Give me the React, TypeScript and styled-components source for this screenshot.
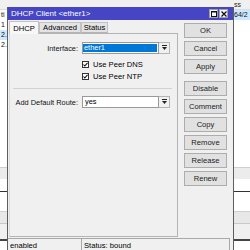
import React from "react";
import styled, { createGlobalStyle } from "styled-components";

const GlobalStyle = createGlobalStyle`
  html, body { margin: 0; padding: 0; background: #ffffff; }
  body {
    width: 250px; height: 250px; overflow: hidden;
    font-family: "Liberation Sans", Arial, sans-serif;
    font-size: 7.4px; color: #000;
  }
  #root { width: 250px; height: 250px; }
`;

const Desktop = styled.div`
  position: relative;
  width: 250px;
  height: 250px;
  overflow: hidden;
  background: #ffffff;
`;

/* ---------- background list window ---------- */
const ListWindow = styled.div`
  display: flex;
  flex-direction: column;
  width: 250px;
  height: 250px;
`;

const ListHeader = styled.div`
  display: grid;
  grid-template-columns: 7px 226px 17px;
  flex: 0 0 10px;
  background: #f0f0f0;
  border-bottom: 1px solid #dcdcdc;
  box-sizing: border-box;
`;

const HeaderCell = styled.div`
  font-size: 7px;
  line-height: 9px;
  padding-left: 1px;
  color: #222;
  overflow: hidden;
  white-space: nowrap;
`;

const ListRow = styled.div`
  display: grid;
  grid-template-columns: 7px 226px 17px;
  flex: 0 0 10px;
`;

const Cell = styled.div<{ $sel?: boolean }>`
  font-size: 7px;
  line-height: 10px;
  overflow: hidden;
  white-space: nowrap;
  padding-left: 1px;
  color: #111;
  background: ${(p) => (p.$sel ? "#cce8ff" : "transparent")};
`;

const Band = styled.div<{ $h: number; $bg: string; $line?: string }>`
  flex: 0 0 ${(p) => p.$h}px;
  background: ${(p) => p.$bg};
  border-top: ${(p) => (p.$line ? `1px solid ${p.$line}` : "none")};
  box-sizing: border-box;
`;

/* ---------- dialog window ---------- */
const Dialog = styled.div`
  position: absolute;
  left: 7px;
  top: 7px;
  width: 227px;
  height: 245px;
  box-sizing: border-box;
  border-left: 1px solid #5e5e5e;
  border-right: 1px solid #5e5e5e;
  background: #f0f0f0;
  display: flex;
  flex-direction: column;
`;

const TitleBar = styled.div`
  flex: 0 0 13px;
  background: #4646c4;
  color: #ffffff;
  display: flex;
  align-items: center;
  padding-left: 3px;
  font-size: 8px;
`;

const TitleText = styled.span`
  flex: 1;
  white-space: nowrap;
`;

const TitleButtons = styled.div`
  display: flex;
  gap: 1px;
  margin-right: 5px;
`;

const TitleButton = styled.div`
  width: 9px;
  height: 9px;
  box-sizing: border-box;
  background: #f7f7f7;
  border: 1px solid #a0a0a0;
  display: flex;
  align-items: center;
  justify-content: center;
`;

const Main = styled.div`
  flex: 1;
  min-height: 0;
  display: flex;
  padding: 1px 0 1px 1px;
`;

const LeftCol = styled.div`
  width: 169px;
  display: flex;
  flex-direction: column;
`;

const TabRow = styled.div`
  display: flex;
  align-items: flex-end;
  flex: 0 0 12px;
  position: relative;
  z-index: 1;
`;

const Tab = styled.div<{ $active?: boolean; $w: number }>`
  width: ${(p) => p.$w}px;
  height: ${(p) => (p.$active ? 13 : 11)}px;
  margin-bottom: ${(p) => (p.$active ? -1 : 0)}px;
  box-sizing: border-box;
  border: 1px solid #c2c2c2;
  border-bottom: ${(p) => (p.$active ? "none" : "1px solid #b4b4b4")};
  background: ${(p) => (p.$active ? "#f7f7f7" : "#e3e3e3")};
  display: flex;
  align-items: center;
  justify-content: center;
  white-space: nowrap;
  font-size: 7.6px;
`;

const Panel = styled.div`
  flex: 1;
  box-sizing: border-box;
  border: 1px solid #b4b4b4;
  border-left-color: #dadada;
  padding-top: 8px;
  display: flex;
  flex-direction: column;
`;

const FormRow = styled.div<{ $mt?: number }>`
  display: grid;
  grid-template-columns: 68px 88px;
  column-gap: 4px;
  height: 12px;
  align-items: center;
  margin-top: ${(p) => p.$mt ?? 0}px;
`;

const Label = styled.div`
  text-align: right;
  white-space: nowrap;
  color: #111;
`;

const Field = styled.div`
  display: flex;
  height: 12px;
`;

const InputBox = styled.div`
  width: 77px;
  height: 12px;
  box-sizing: border-box;
  border: 1px solid #9a9a9a;
  background: #ffffff;
  padding: 1px 1px 1px 0;
  display: flex;
`;

const SelectedText = styled.div`
  flex: 1;
  background: #0078d7;
  color: #ffffff;
  padding-left: 1px;
  line-height: 8px;
  white-space: nowrap;
`;

const PlainText = styled.div`
  flex: 1;
  padding-left: 2px;
  line-height: 8px;
  white-space: nowrap;
`;

const DropButton = styled.div`
  width: 11px;
  height: 12px;
  box-sizing: border-box;
  border: 1px solid #b4b4b4;
  border-left: none;
  background: #f0f0f0;
  display: flex;
  align-items: center;
  justify-content: center;
`;

const CheckLine = styled.div`
  display: flex;
  align-items: center;
  gap: 4px;
  white-space: nowrap;
  font-size: 7.6px;
`;

const CheckBox = styled.div`
  width: 7px;
  height: 7px;
  box-sizing: border-box;
  border: 1px solid #333333;
  background: #ffffff;
  display: flex;
  align-items: center;
  justify-content: center;
`;

const Separator = styled.div`
  height: 1px;
  background: #d2d2d2;
  margin: 6px 5px 0 3px;
`;

const ButtonCol = styled.div`
  width: 43px;
  margin-left: 6px;
  padding-top: 2px;
  display: flex;
  flex-direction: column;
  gap: 3px;
`;

const Button = styled.div<{ $gapBefore?: boolean }>`
  height: 15px;
  box-sizing: border-box;
  border: 1px solid #adadad;
  background: #e1e1e1;
  display: flex;
  align-items: center;
  justify-content: center;
  color: #222;
  font-size: 7.6px;
  margin-top: ${(p) => (p.$gapBefore ? 4 : 0)}px;
`;

const StatusBar = styled.div`
  flex: 0 0 13px;
  display: flex;
  margin-right: 3px;
  border-top: 1px solid #a8a8a8;
`;

const StatusCell = styled.div<{ $w?: number }>`
  ${(p) => (p.$w ? `width: ${p.$w}px; flex: 0 0 ${p.$w}px;` : "flex: 1;")}
  box-sizing: border-box;
  padding-left: 2px;
  line-height: 13px;
  white-space: nowrap;
  font-size: 7.6px;
  border-right: 1px solid #a8a8a8;
`;

const DropArrow = () => (
  <svg width="5" height="6" viewBox="0 0 5 6">
    <rect x="0" y="0" width="5" height="1" fill="#222" />
    <polygon points="0,2 5,2 2.5,5" fill="#222" />
  </svg>
);

const Check = () => (
  <svg width="5" height="5" viewBox="0 0 5 5">
    <polyline points="0.5,2.5 1.8,4 4.5,0.8" fill="none" stroke="#111" strokeWidth="1.1" />
  </svg>
);

const MaxIcon = () => (
  <svg width="6" height="6" viewBox="0 0 6 6">
    <rect x="0.5" y="0.5" width="5" height="5" fill="none" stroke="#111" strokeWidth="1" />
    <rect x="0" y="0" width="6" height="1.5" fill="#111" />
  </svg>
);

const CloseIcon = () => (
  <svg width="6" height="6" viewBox="0 0 6 6">
    <path d="M0.5 0.5 L5.5 5.5 M5.5 0.5 L0.5 5.5" stroke="#111" strokeWidth="1.3" />
  </svg>
);

const Dropdown: React.FC<{ children: React.ReactNode }> = ({ children }) => (
  <Field>
    <InputBox>{children}</InputBox>
    <DropButton>
      <DropArrow />
    </DropButton>
  </Field>
);

const buttons = ["OK", "Cancel", "Apply", "Disable", "Comment", "Copy", "Remove", "Release", "Renew"];

export default function App() {
  return (
    <>
      <GlobalStyle />
      <Desktop>
        <ListWindow>
          <ListHeader>
            <HeaderCell />
            <HeaderCell />
            <HeaderCell>ss</HeaderCell>
          </ListHeader>
          <ListRow>
            <Cell>ti</Cell>
            <Cell />
            <Cell $sel>64/2</Cell>
          </ListRow>
          <ListRow>
            <Cell>1</Cell>
            <Cell />
            <Cell />
          </ListRow>
          <ListRow>
            <Cell $sel>2.</Cell>
            <Cell />
            <Cell />
          </ListRow>
          <ListRow>
            <Cell>2.</Cell>
            <Cell />
            <Cell />
          </ListRow>
          <Band $h={117} $bg="#ffffff" />
          <Band $h={12} $bg="#ececec" $line="#cfcfcf" />
          <Band $h={12} $bg="#ffffff" />
          <Band $h={1} $bg="#333333" />
          <Band $h={19} $bg="#ffffff" />
          <Band $h={12} $bg="#e8e8e8" $line="#d0d0d0" />
          <Band $h={16} $bg="#f0f0f0" $line="#c8c8c8" />
          <Band $h={2} $bg="#444444" />
          <Band $h={20} $bg="#ffffff" />
        </ListWindow>

        <Dialog>
          <TitleBar>
            <TitleText>DHCP Client &lt;ether1&gt;</TitleText>
            <TitleButtons>
              <TitleButton>
                <MaxIcon />
              </TitleButton>
              <TitleButton>
                <CloseIcon />
              </TitleButton>
            </TitleButtons>
          </TitleBar>
          <Main>
            <LeftCol>
              <TabRow>
                <Tab $active $w={30}>DHCP</Tab>
                <Tab $w={42}>Advanced</Tab>
                <Tab $w={27}>Status</Tab>
              </TabRow>
              <Panel>
                <FormRow>
                  <Label>Interface:</Label>
                  <Dropdown>
                    <SelectedText>ether1</SelectedText>
                  </Dropdown>
                </FormRow>
                <FormRow $mt={4}>
                  <span />
                  <CheckLine>
                    <CheckBox>
                      <Check />
                    </CheckBox>
                    Use Peer DNS
                  </CheckLine>
                </FormRow>
                <FormRow>
                  <span />
                  <CheckLine>
                    <CheckBox>
                      <Check />
                    </CheckBox>
                    Use Peer NTP
                  </CheckLine>
                </FormRow>
                <Separator />
                <FormRow $mt={7}>
                  <Label>Add Default Route:</Label>
                  <Dropdown>
                    <PlainText>yes</PlainText>
                  </Dropdown>
                </FormRow>
              </Panel>
            </LeftCol>
            <ButtonCol>
              {buttons.map((b) => (
                <Button key={b} $gapBefore={b === "Disable"}>
                  {b}
                </Button>
              ))}
            </ButtonCol>
          </Main>
          <StatusBar>
            <StatusCell $w={74}>enabled</StatusCell>
            <StatusCell>Status: bound</StatusCell>
          </StatusBar>
        </Dialog>
      </Desktop>
    </>
  );
}
